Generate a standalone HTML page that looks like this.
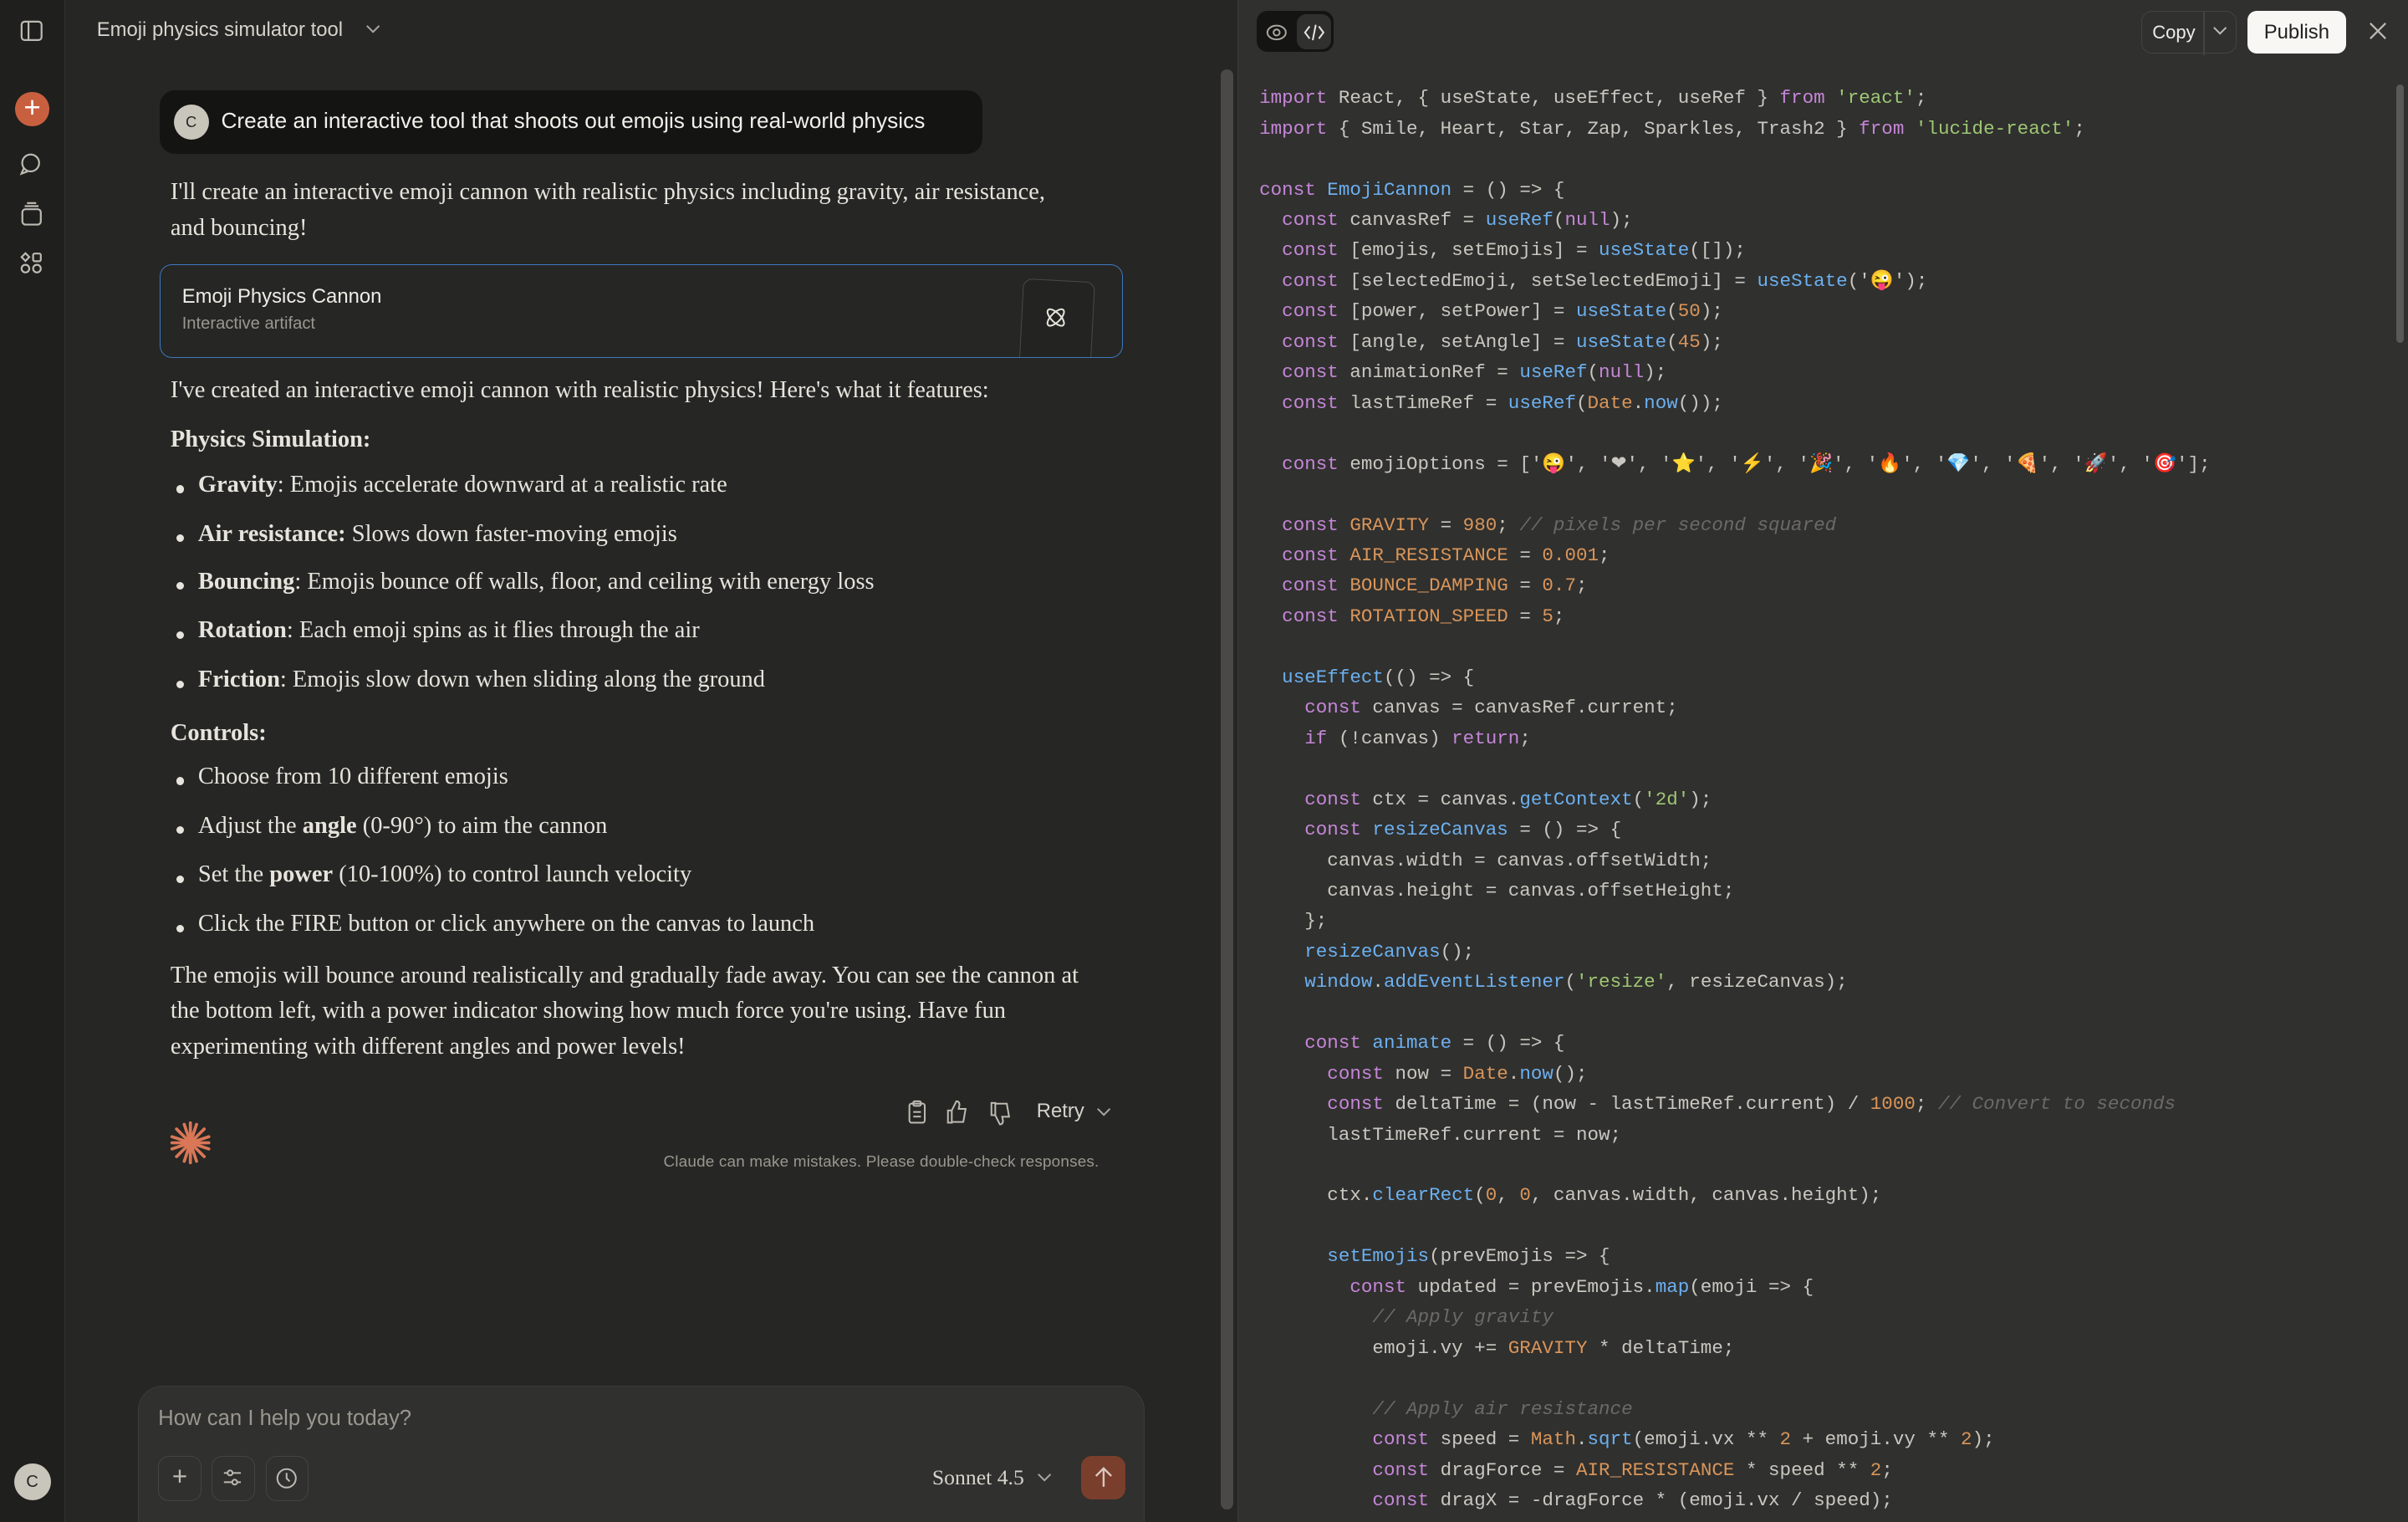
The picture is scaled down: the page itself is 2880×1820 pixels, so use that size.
<!DOCTYPE html>
<html><head><meta charset="utf-8"><style>
html,body{margin:0;padding:0;width:2880px;height:1820px;overflow:hidden;background:#262624}
#z{zoom:1.83673;width:1568px;height:991px;position:relative;font-family:"Liberation Sans",sans-serif;color:#e8e6e0}
.side{position:absolute;left:0;top:0;width:42px;height:991px;background:#1f1f1d;border-right:1px solid #333331}
.main{position:absolute;left:43px;top:0;width:762px;height:991px;background:#262624}
.right{position:absolute;left:806px;top:0;width:762px;height:991px;background:#30302e;border-left:1px solid #3a3a38}
.serif{font-family:"Liberation Serif",serif;font-size:15.5px;color:#e6e4dc}
.p{position:absolute;left:68px;width:600px;line-height:23px}
.li{position:absolute;left:86px}
.li:before{content:"";position:absolute;left:-14px;top:9px;width:5px;height:5px;border-radius:50%;background:#e6e4dc}
pre{margin:0;position:absolute;left:820px;top:54px;font-family:"Liberation Mono",monospace;font-size:12.28px;line-height:19.85px;color:#c9c7c0}
.k{color:#c586d8}.f{color:#6cb0f0}.s{color:#9ec774}.n{color:#d9955a}.c{color:#6b6a66;font-style:italic}
svg{position:absolute}
</style></head><body><div id="z">
<div class="side">
<svg style="left:13px;top:13px" width="15" height="14" viewBox="0 0 15 14" fill="none" stroke="#bdbab2" stroke-width="1.2"><rect x="1" y="1" width="13" height="12" rx="2"/><line x1="5.5" y1="1" x2="5.5" y2="13"/></svg>
<div style="position:absolute;left:10px;top:60px;width:22px;height:22px;border-radius:50%;background:#c8603f;color:#fff;text-align:center;line-height:21px;font-size:19px">+</div>
<svg style="left:12px;top:99px" width="16" height="16" viewBox="0 0 16 16" fill="none" stroke="#bdbab2" stroke-width="1.2"><circle cx="8" cy="7" r="5.5"/><path d="M3.5 10.5 2 14l4-1.5"/></svg>
<svg style="left:13px;top:131px" width="15" height="16" viewBox="0 0 15 16" fill="none" stroke="#bdbab2" stroke-width="1.2"><rect x="1.5" y="5" width="12" height="10" rx="2"/><line x1="3" y1="3" x2="12" y2="3"/><line x1="4.5" y1="1" x2="10.5" y2="1"/></svg>
<svg style="left:13px;top:164px" width="15" height="15" viewBox="0 0 15 15" fill="none" stroke="#bdbab2" stroke-width="1.2"><path d="M3.5 1 6 3.5 3.5 6 1 3.5Z"/><rect x="8.5" y="1.2" width="5" height="5" rx="1"/><circle cx="3.5" cy="11" r="2.5"/><circle cx="11" cy="11" r="2.5"/></svg>
<div style="position:absolute;left:9px;top:953px;width:24px;height:24px;border-radius:50%;background:#c8c5bb;color:#262624;font-size:11px;text-align:center;line-height:24px">C</div>
</div>
<div class="main">
<div style="position:absolute;left:20px;top:12px;font-size:13px;color:#d6d3cb">Emoji physics simulator tool</div>
<svg style="left:195px;top:16px" width="10" height="7" viewBox="0 0 10 7" fill="none" stroke="#a9a69e" stroke-width="1.1"><path d="M1 1l4 4 4-4"/></svg>
<div style="position:absolute;left:61px;top:59px;width:536px;height:41px;background:#141413;border-radius:10px"></div>
<div style="position:absolute;left:70px;top:68px;width:23px;height:23px;border-radius:50%;background:#c8c5bb;color:#262624;font-size:10px;text-align:center;line-height:23px">C</div>
<div style="position:absolute;left:101px;top:70px;font-size:14.3px;color:#f2f0ea">Create an interactive tool that shoots out emojis using real-world physics</div>
<div class="serif p" style="top:114px;width:640px">I'll create an interactive emoji cannon with realistic physics including gravity, air resistance,<br>and bouncing!</div>
<div style="position:absolute;left:61px;top:172px;width:626px;height:60px;border:1px solid #3d78c2;border-radius:8px;background:#262624;overflow:hidden">
<div style="position:absolute;left:14px;top:13px;font-size:13px;color:#eeece6">Emoji Physics Cannon</div>
<div style="position:absolute;left:14px;top:32px;font-size:11px;color:#9a978f">Interactive artifact</div>
<div style="position:absolute;left:560px;top:10px;width:46px;height:60px;border:1px solid #4a4946;border-radius:6px;background:#232321;transform:rotate(3deg)"></div>
<svg style="left:575px;top:26px" width="16" height="16" viewBox="0 0 16 16" fill="none" stroke="#e6e4dc" stroke-width="1.1"><ellipse cx="8" cy="8" rx="7" ry="3" transform="rotate(45 8 8)"/><ellipse cx="8" cy="8" rx="7" ry="3" transform="rotate(-45 8 8)"/></svg>
</div>
<div class="serif p" style="top:243px">I've created an interactive emoji cannon with realistic physics! Here's what it features:</div>
<div class="serif p" style="top:275px"><b>Physics Simulation:</b></div>
<div class="serif li" style="top:307px"><b>Gravity</b>: Emojis accelerate downward at a realistic rate</div>
<div class="serif li" style="top:339px"><b>Air resistance:</b> Slows down faster-moving emojis</div>
<div class="serif li" style="top:370px"><b>Bouncing</b>: Emojis bounce off walls, floor, and ceiling with energy loss</div>
<div class="serif li" style="top:402px"><b>Rotation</b>: Each emoji spins as it flies through the air</div>
<div class="serif li" style="top:434px"><b>Friction</b>: Emojis slow down when sliding along the ground</div>
<div class="serif p" style="top:466px"><b>Controls:</b></div>
<div class="serif li" style="top:497px">Choose from 10 different emojis</div>
<div class="serif li" style="top:529px">Adjust the <b>angle</b> (0-90°) to aim the cannon</div>
<div class="serif li" style="top:561px">Set the <b>power</b> (10-100%) to control launch velocity</div>
<div class="serif li" style="top:593px">Click the FIRE button or click anywhere on the canvas to launch</div>
<div class="serif p" style="top:624px;width:600px">The emojis will bounce around realistically and gradually fade away. You can see the cannon at the bottom left, with a power indicator showing how much force you're using. Have fun experimenting with different angles and power levels!</div>
<svg style="left:547px;top:716px" width="14" height="16" viewBox="0 0 14 16" fill="none" stroke="#bdbab2" stroke-width="1.1"><rect x="2" y="2.5" width="10" height="12.5" rx="1.5"/><rect x="4.5" y="1" width="5" height="3" rx="1"/><line x1="4.5" y1="8" x2="9.5" y2="8"/><line x1="4.5" y1="11" x2="9.5" y2="11"/></svg>
<svg style="left:573px;top:716px" width="15" height="16" viewBox="0 0 15 16" fill="none" stroke="#bdbab2" stroke-width="1.1"><path d="M4 7v8H1.5V7ZM4 7l3-6c1.5 0 2 1 2 2.5L8.5 6H13l-1.5 8.5H4"/></svg>
<svg style="left:601px;top:717px" width="15" height="16" viewBox="0 0 15 16" fill="none" stroke="#bdbab2" stroke-width="1.1"><path d="M4 9V1H1.5v8ZM4 9l3 6c1.5 0 2-1 2-2.5L8.5 10H13L11.5 1.5H4"/></svg>
<div style="position:absolute;left:632px;top:716px;font-size:13px;color:#d6d3cb">Retry</div>
<svg style="left:671px;top:721px" width="10" height="7" viewBox="0 0 10 7" fill="none" stroke="#a9a69e" stroke-width="1.1"><path d="M1 1l4 4 4-4"/></svg>
<svg style="left:67px;top:729px" width="28" height="30" viewBox="-14 -15 28 30" stroke="#d97757" stroke-width="2" stroke-linecap="round"><line x1="0" y1="-13" x2="0" y2="13"/><line x1="-12" y1="0" x2="12" y2="0"/><line x1="-9" y1="-9" x2="9" y2="9"/><line x1="-9" y1="9" x2="9" y2="-9"/><line x1="-4" y1="-12" x2="4" y2="12"/><line x1="4" y1="-12" x2="-4" y2="12"/><line x1="-12" y1="-4" x2="12" y2="4"/><line x1="-12" y1="4" x2="12" y2="-4"/></svg>
<div style="position:absolute;left:389px;top:751px;font-size:10.3px;color:#9a978f;letter-spacing:0.1px">Claude can make mistakes. Please double-check responses.</div>
<div style="position:absolute;left:47px;top:902px;width:654px;height:89px;background:#30302e;border:1px solid #3b3b39;border-bottom:none;border-radius:16px 16px 0 0"></div>
<div style="position:absolute;left:60px;top:916px;font-size:14px;color:#9a978f">How can I help you today?</div>
<div style="position:absolute;left:60px;top:948px;width:27px;height:28px;border:1px solid #444441;border-radius:7px;color:#bdbab2;text-align:center;line-height:26px;font-size:17px">+</div>
<div style="position:absolute;left:95px;top:948px;width:27px;height:28px;border:1px solid #444441;border-radius:7px"></div>
<svg style="left:102px;top:955px" width="13" height="14" viewBox="0 0 13 14" fill="none" stroke="#bdbab2" stroke-width="1.1"><line x1="1" y1="4" x2="12" y2="4"/><line x1="1" y1="10" x2="12" y2="10"/><circle cx="5" cy="4" r="1.6" fill="#30302e"/><circle cx="8" cy="10" r="1.6" fill="#30302e"/></svg>
<div style="position:absolute;left:130px;top:948px;width:27px;height:28px;border:1px solid #444441;border-radius:7px"></div>
<svg style="left:136px;top:955px" width="15" height="15" viewBox="0 0 15 15" fill="none" stroke="#bdbab2" stroke-width="1.1"><circle cx="7.5" cy="7.5" r="6"/><path d="M7.5 4v3.5l2 2"/></svg>
<div style="position:absolute;left:564px;top:954px;font-family:'Liberation Serif',serif;font-size:14px;color:#d6d3cb">Sonnet 4.5</div>
<svg style="left:632px;top:959px" width="10" height="7" viewBox="0 0 10 7" fill="none" stroke="#a9a69e" stroke-width="1.1"><path d="M1 1l4 4 4-4"/></svg>
<div style="position:absolute;left:661px;top:948px;width:29px;height:28px;border-radius:7px;background:#7a3e2c"></div>
<svg style="left:669px;top:955px" width="13" height="14" viewBox="0 0 13 14" fill="none" stroke="#d8c8c0" stroke-width="1.3"><path d="M6.5 13V1M1.5 6l5-5 5 5"/></svg>
<div style="position:absolute;left:752px;top:45px;width:8px;height:938px;background:#4a4947;border-radius:4px"></div>
</div>
<div class="right">
<div style="position:absolute;left:12px;top:7px;width:50px;height:27px;background:#141413;border-radius:7px"></div>
<div style="position:absolute;left:38px;top:9px;width:22px;height:23px;background:#30302e;border-radius:6px"></div>
<svg style="left:18px;top:14px" width="14" height="14" viewBox="0 0 14 14" fill="none" stroke="#a9a69e" stroke-width="1.1"><ellipse cx="7" cy="7" rx="6" ry="4.5"/><circle cx="7" cy="7" r="2"/></svg>
<svg style="left:42px;top:14px" width="14" height="14" viewBox="0 0 14 14" fill="none" stroke="#e6e4dc" stroke-width="1.1"><path d="M4 3 1 7l3 4M10 3l3 4-3 4M8 2 6 12"/></svg>
<div style="position:absolute;left:588px;top:7px;width:61px;height:27px;border:1px solid #444441;border-radius:7px"></div>
<div style="position:absolute;left:628px;top:7px;width:1px;height:29px;background:#444441"></div>
<div style="position:absolute;left:595px;top:14px;font-size:12px;color:#eeece6">Copy</div>
<svg style="left:634px;top:17px" width="10" height="7" viewBox="0 0 10 7" fill="none" stroke="#bdbab2" stroke-width="1.1"><path d="M1 1l4 4 4-4"/></svg>
<div style="position:absolute;left:657px;top:7px;width:64px;height:28px;background:#f8f7f3;border-radius:6px;color:#1f1f1d;font-size:13px;text-align:center;line-height:28px">Publish</div>
<svg style="left:736px;top:14px" width="12" height="12" viewBox="0 0 12 12" stroke="#bdbab2" stroke-width="1.2"><path d="M1 1l10 10M11 1 1 11"/></svg>
<div style="position:absolute;left:754px;top:55px;width:5px;height:168px;background:#5a5957;border-radius:3px"></div>
</div>
<pre><span class="k">import</span> React, { useState, useEffect, useRef } <span class="k">from</span> <span class="s">'react'</span>;
<span class="k">import</span> { Smile, Heart, Star, Zap, Sparkles, Trash2 } <span class="k">from</span> <span class="s">'lucide-react'</span>;

<span class="k">const</span> <span class="f">EmojiCannon</span> = () =&gt; {
  <span class="k">const</span> canvasRef = <span class="f">useRef</span>(<span class="k">null</span>);
  <span class="k">const</span> [emojis, setEmojis] = <span class="f">useState</span>([]);
  <span class="k">const</span> [selectedEmoji, setSelectedEmoji] = <span class="f">useState</span>('😜');
  <span class="k">const</span> [power, setPower] = <span class="f">useState</span>(<span class="n">50</span>);
  <span class="k">const</span> [angle, setAngle] = <span class="f">useState</span>(<span class="n">45</span>);
  <span class="k">const</span> animationRef = <span class="f">useRef</span>(<span class="k">null</span>);
  <span class="k">const</span> lastTimeRef = <span class="f">useRef</span>(<span class="n">Date</span>.<span class="f">now</span>());

  <span class="k">const</span> emojiOptions = ['😜', '❤', '⭐', '⚡', '🎉', '🔥', '💎', '🍕', '🚀', '🎯'];

  <span class="k">const</span> <span class="n">GRAVITY</span> = <span class="n">980</span>; <span class="c">// pixels per second squared</span>
  <span class="k">const</span> <span class="n">AIR_RESISTANCE</span> = <span class="n">0.001</span>;
  <span class="k">const</span> <span class="n">BOUNCE_DAMPING</span> = <span class="n">0.7</span>;
  <span class="k">const</span> <span class="n">ROTATION_SPEED</span> = <span class="n">5</span>;

  <span class="f">useEffect</span>(() =&gt; {
    <span class="k">const</span> canvas = canvasRef.current;
    <span class="k">if</span> (!canvas) <span class="k">return</span>;

    <span class="k">const</span> ctx = canvas.<span class="f">getContext</span>(<span class="s">'2d'</span>);
    <span class="k">const</span> <span class="f">resizeCanvas</span> = () =&gt; {
      canvas.width = canvas.offsetWidth;
      canvas.height = canvas.offsetHeight;
    };
    <span class="f">resizeCanvas</span>();
    <span class="f">window</span>.<span class="f">addEventListener</span>(<span class="s">'resize'</span>, resizeCanvas);

    <span class="k">const</span> <span class="f">animate</span> = () =&gt; {
      <span class="k">const</span> now = <span class="n">Date</span>.<span class="f">now</span>();
      <span class="k">const</span> deltaTime = (now - lastTimeRef.current) / <span class="n">1000</span>; <span class="c">// Convert to seconds</span>
      lastTimeRef.current = now;

      ctx.<span class="f">clearRect</span>(<span class="n">0</span>, <span class="n">0</span>, canvas.width, canvas.height);

      <span class="f">setEmojis</span>(prevEmojis =&gt; {
        <span class="k">const</span> updated = prevEmojis.<span class="f">map</span>(emoji =&gt; {
          <span class="c">// Apply gravity</span>
          emoji.vy += <span class="n">GRAVITY</span> * deltaTime;

          <span class="c">// Apply air resistance</span>
          <span class="k">const</span> speed = <span class="n">Math</span>.<span class="f">sqrt</span>(emoji.vx ** <span class="n">2</span> + emoji.vy ** <span class="n">2</span>);
          <span class="k">const</span> dragForce = <span class="n">AIR_RESISTANCE</span> * speed ** <span class="n">2</span>;
          <span class="k">const</span> dragX = -dragForce * (emoji.vx / speed);</pre>
</div></body></html>
